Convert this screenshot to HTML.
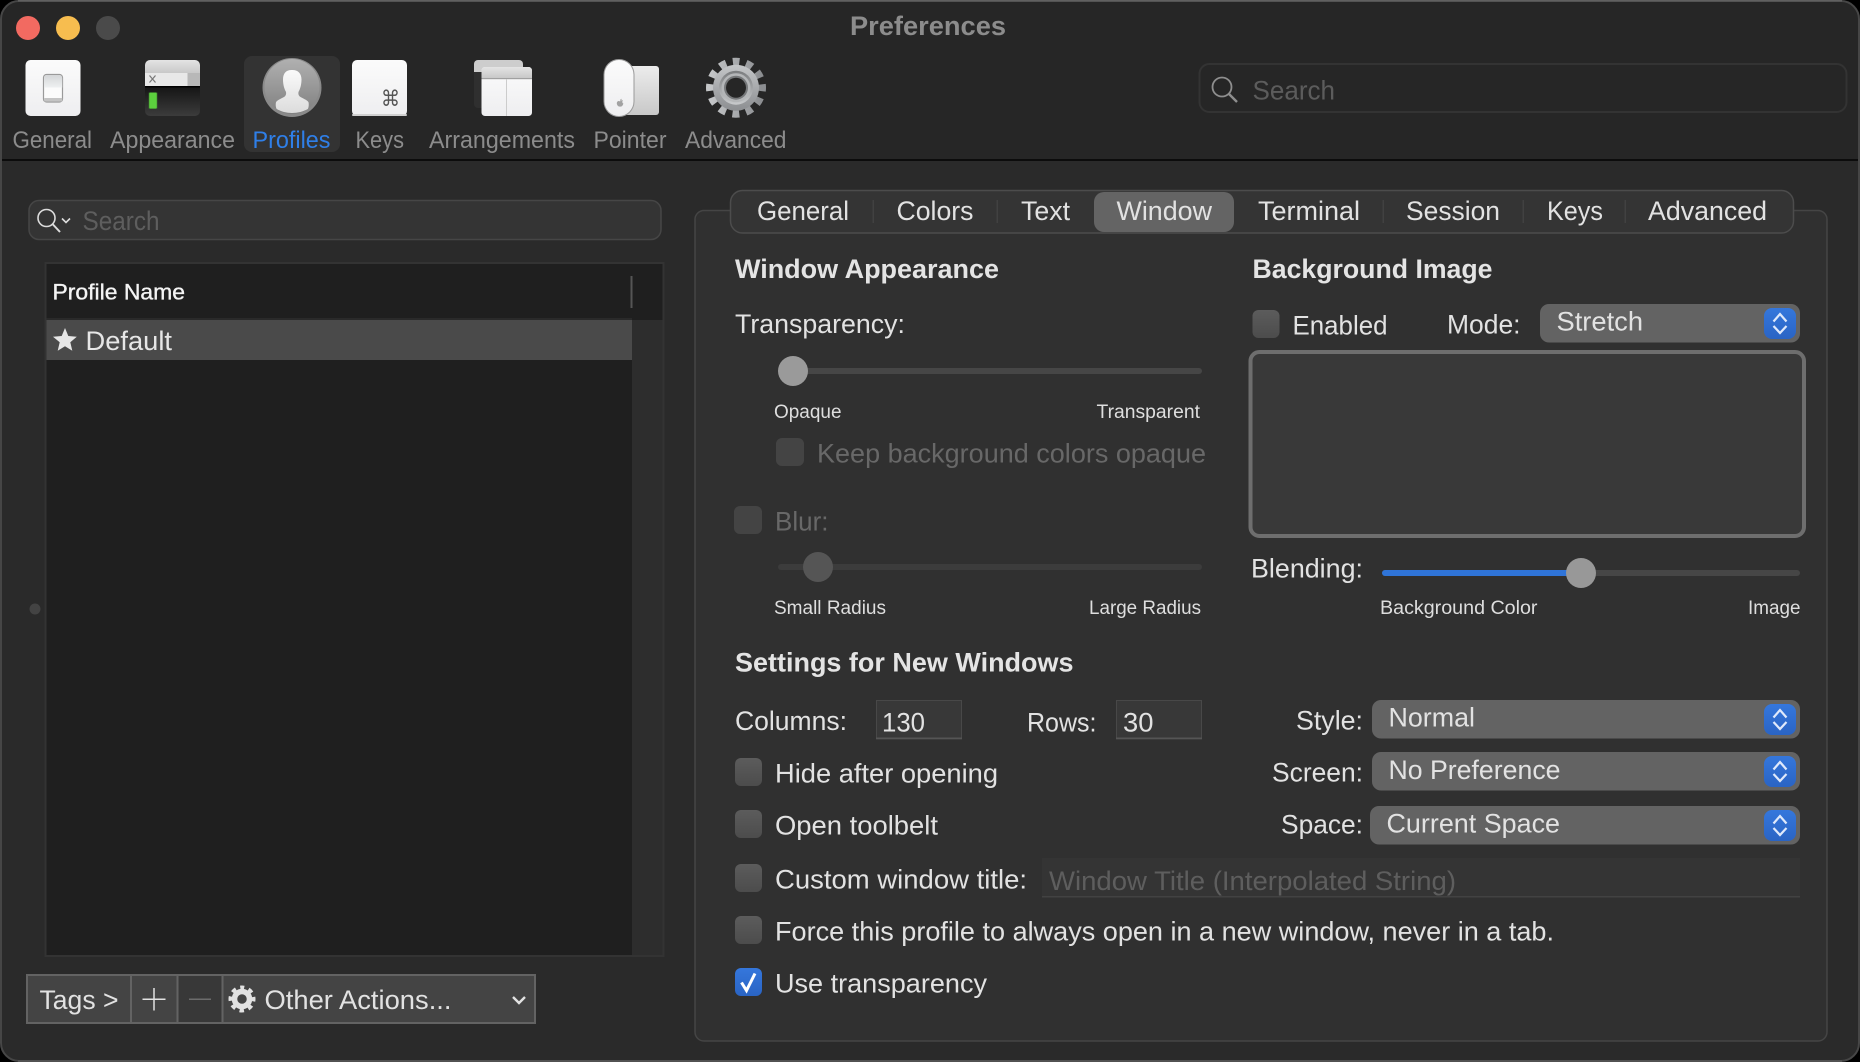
<!DOCTYPE html>
<html><head><meta charset="utf-8"><title>Preferences</title>
<style>
html,body{margin:0;padding:0;background:#000;width:1860px;height:1062px;overflow:hidden}
svg{display:block;filter:blur(.35px)}
text{font-family:"Liberation Sans",sans-serif;fill:#e2e2e2;font-size:26.5px}
.tb{font-size:24px;fill:#8c8c8c}
.h{font-weight:bold;font-size:27px;fill:#e4e4e4}
.s{font-size:19px;fill:#dedede}
.d{fill:#686868}
.ph{fill:#5e5e5e}
</style></head>
<body>
<svg width="1860" height="1062" viewBox="0 0 1860 1062" xmlns="http://www.w3.org/2000/svg">
<defs>
<linearGradient id="wh" x1="0" y1="0" x2="0" y2="1"><stop offset="0" stop-color="#fbfbfb"/><stop offset="1" stop-color="#eeeef0"/></linearGradient>
<linearGradient id="bar" x1="0" y1="0" x2="0" y2="1"><stop offset="0" stop-color="#e4e4e4"/><stop offset="1" stop-color="#c8c8c8"/></linearGradient>
<linearGradient id="sw" x1="0" y1="0" x2="0" y2="1"><stop offset="0" stop-color="#d4d6d8"/><stop offset="1" stop-color="#eef0f1"/></linearGradient>
<linearGradient id="term" x1="0" y1="0" x2="0" y2="1"><stop offset="0" stop-color="#161616"/><stop offset="1" stop-color="#3c3c3c"/></linearGradient>
<linearGradient id="av" x1="0" y1="0" x2="0" y2="1"><stop offset="0" stop-color="#b0b0b0"/><stop offset="1" stop-color="#808080"/></linearGradient>
<linearGradient id="head" x1="0" y1="0" x2="0" y2="1"><stop offset="0" stop-color="#fafafa"/><stop offset="1" stop-color="#dcdcdc"/></linearGradient>
<linearGradient id="pad" x1="0" y1="0" x2="0" y2="1"><stop offset="0" stop-color="#ececec"/><stop offset="1" stop-color="#c8c8c8"/></linearGradient>
<linearGradient id="gr" x1="0" y1="0" x2="0" y2="1"><stop offset="0" stop-color="#c4c6c8"/><stop offset="1" stop-color="#8c8e91"/></linearGradient>
<linearGradient id="gr2" x1="0" y1="0" x2="0" y2="1"><stop offset="0" stop-color="#7a7c7e"/><stop offset="1" stop-color="#c8cacc"/></linearGradient>
<linearGradient id="cb" x1="0" y1="0" x2="0" y2="1"><stop offset="0" stop-color="#5c5c5c"/><stop offset="1" stop-color="#4c4c4c"/></linearGradient>
<linearGradient id="blue" x1="0" y1="0" x2="0" y2="1"><stop offset="0" stop-color="#3577dc"/><stop offset="1" stop-color="#2a64c4"/></linearGradient>
<clipPath id="win"><rect x="1" y="1" width="1858" height="1060" rx="18"/></clipPath>
<g id="step">
  <rect x="0" y="0" width="32" height="31" rx="8" fill="url(#blue)"/>
  <path d="M9.500 13.500 L16 6 L22.500 13.500 M9.500 18 L16 25 L22.500 18" fill="none" stroke="#dfe9fb" stroke-width="2.200"/>
</g>
<rect id="chk" width="27" height="28" rx="6" fill="url(#cb)"/>
<rect id="chkd" width="28" height="28" rx="6" fill="#444"/>
</defs>

<rect width="1860" height="1062" fill="#000"/>
<g clip-path="url(#win)">
  <rect width="1860" height="1062" fill="#2a2a2a"/>
  <rect width="1860" height="159" fill="#262626"/>
  <rect y="159" width="1860" height="2" fill="#0c0c0c"/>
</g>
<rect x="1" y="1" width="1858" height="1060" rx="18" fill="none" stroke="#464646" stroke-width="2"/>
<rect x="18" y="0" width="1824" height="1.500" fill="#606060"/>
<rect x="18" y="1060" width="1824" height="2" fill="#525252"/>

<!-- traffic lights -->
<circle cx="28" cy="28" r="12" fill="#f26a61"/>
<circle cx="68" cy="28" r="12" fill="#f7bd4f"/>
<circle cx="108" cy="28" r="12" fill="#4a4a4a"/>
<text x="850" y="35" font-weight="bold" style="font-size:27px;fill:#8c8c8c" textLength="156" lengthAdjust="spacingAndGlyphs">Preferences</text>

<!-- toolbar -->
<rect x="244" y="56" width="96" height="96" rx="8" fill="#333"/>

<!-- General -->
<rect x="25.500" y="60" width="55" height="56" rx="5" fill="url(#wh)"/>
<rect x="43.500" y="74.500" width="19" height="27.500" rx="3" fill="#fbfbfb" stroke="#9a9a9a" stroke-width="1.200"/>
<path d="M44.200 78 a3 3 0 0 1 3-3 h12 a3 3 0 0 1 3 3 v9.500 h-18 z" fill="url(#sw)"/>
<rect x="44.200" y="98" width="18" height="3.400" fill="#c4c4c4"/>

<!-- Appearance -->
<path d="M145 65 a5 5 0 0 1 5-5 h45 a5 5 0 0 1 5 5 v8 h-55 z" fill="url(#bar)"/>
<rect x="145" y="73" width="55" height="13" fill="#e8e8e8"/>
<rect x="187.500" y="73" width="12.500" height="13" fill="#b8b8b8"/>
<path d="M149.500 75.500 l6 7 m0 -7 l-6 7" stroke="#777" stroke-width="1.200" fill="none"/>
<rect x="145" y="86" width="55" height="1.500" fill="#000"/>
<path d="M145 87.500 h55 v23.500 a5 5 0 0 1 -5 5 h-45 a5 5 0 0 1 -5 -5 z" fill="url(#term)"/>
<rect x="148.500" y="92" width="9" height="17" rx="1.500" fill="#3f8f2c" opacity=".5"/>
<rect x="149.200" y="92.700" width="7.600" height="15.800" rx="1" fill="#5ccf3e"/>

<!-- Profiles avatar -->
<circle cx="292" cy="87.500" r="29.500" fill="#8a8a8a"/>
<circle cx="292" cy="86.500" r="27.500" fill="url(#av)"/>
<path d="M291.500 70 c-5.500 0 -8.500 3.500 -8.500 9.500 c0 5 1.300 9.500 2.800 12 c.7 1.800 .2 3.700 -.8 4.700 c-2.400 2 -7.300 3.300 -8.900 5.800 c-.6 1.400 -.5 5.500 .6 7 c4 2.500 10 4 15.300 4 s11.800 -1.500 15.800 -4 c1.100 -1.500 1.200 -5.600 .6 -7 c-1.600 -2.500 -6.500 -3.800 -8.900 -5.800 c-1 -1 -1.500 -2.900 -.8 -4.700 c1.500 -2.500 2.800 -7 2.800 -12 c0 -6 -3.500 -9.500 -9 -9.500 z" fill="url(#head)"/>

<!-- Keys -->
<rect x="352" y="60" width="55" height="56" rx="5" fill="url(#wh)"/>
<rect x="352" y="114" width="55" height="2" rx="1" fill="#d0d0d0"/>
<text x="381" y="106" style="font-family:'DejaVu Sans',sans-serif;font-size:22px;fill:#555" textLength="19" lengthAdjust="spacingAndGlyphs">⌘</text>

<!-- Arrangements -->
<path d="M474 64 a4 4 0 0 1 4-4 h41 a4 4 0 0 1 4 4 v8 h-49 z" fill="#cdcdcd"/>
<path d="M474 72 h10 v36 h-6 a4 4 0 0 1 -4 -4 z" fill="#2f2f2f"/>
<rect x="481.500" y="67" width="50.500" height="49" rx="3.500" fill="url(#wh)"/>
<path d="M481.500 70.500 a3.500 3.500 0 0 1 3.500-3.500 h43.500 a3.500 3.500 0 0 1 3.500 3.500 v7.500 h-50.500 z" fill="url(#bar)"/>
<rect x="481.500" y="78" width="50.500" height="1.200" fill="#a0a0a0"/>
<rect x="506" y="79" width="1" height="37" fill="#cccccc"/>

<!-- Pointer -->
<rect x="624" y="66" width="35" height="49" rx="3" fill="url(#pad)"/>
<rect x="603.500" y="59" width="31" height="58" rx="15.500" fill="#9a9a9a"/>
<rect x="604.500" y="60" width="29" height="56" rx="14.500" fill="url(#wh)"/>
<path d="M620 101.500 c1-1.500 2.500-1.300 3-1 c-1 .8 -.9 2.400 .4 3 c-.6 2 -1.700 3.500 -3.400 3 c-1.700 .5 -3.200 -1.500 -3.200 -3.200 c0 -2.200 2 -2.800 3.200 -1.800 z M620 100.800 c0 -1 .7 -1.800 1.700 -2 c0 1 -.7 1.800 -1.700 2 z" fill="#a2a2a2"/>

<!-- Advanced gear -->
<circle cx="736" cy="87.700" r="25.500" fill="none" stroke="url(#gr)" stroke-width="9" stroke-dasharray="6.700 6.652" stroke-dashoffset="3.350" transform="rotate(-90 736 87.700)"/>
<circle cx="736" cy="87.700" r="23" fill="url(#gr)"/>
<circle cx="736" cy="87.700" r="17" fill="url(#gr2)"/>
<circle cx="736" cy="87.700" r="14.500" fill="#b4b6b8"/>
<circle cx="736" cy="87.700" r="12" fill="#76787a"/>
<circle cx="736" cy="87.700" r="10" fill="#262626"/>

<text class="tb" x="12.500" y="148" textLength="79.500" lengthAdjust="spacingAndGlyphs">General</text>
<text class="tb" x="110" y="148" textLength="125" lengthAdjust="spacingAndGlyphs">Appearance</text>
<text class="tb" x="252.500" y="148" textLength="78" lengthAdjust="spacingAndGlyphs" style="fill:#2f7fe8">Profiles</text>
<text class="tb" x="355.500" y="148" textLength="48.500" lengthAdjust="spacingAndGlyphs">Keys</text>
<text class="tb" x="429" y="148" textLength="146" lengthAdjust="spacingAndGlyphs">Arrangements</text>
<text class="tb" x="593.500" y="148" textLength="73" lengthAdjust="spacingAndGlyphs">Pointer</text>
<text class="tb" x="685" y="148" textLength="101.500" lengthAdjust="spacingAndGlyphs">Advanced</text>

<!-- top search -->
<rect x="1199.500" y="64" width="647" height="48" rx="10" fill="#262626" stroke="#333" stroke-width="2"/>
<circle cx="1222" cy="87" r="9.500" fill="none" stroke="#8e8e8e" stroke-width="1.800"/>
<path d="M1229 94 L1237 102" stroke="#8e8e8e" stroke-width="2.400"/>
<text class="ph" x="1252.500" y="99.500" textLength="82.500" lengthAdjust="spacingAndGlyphs" style="fill:#5c5c5c">Search</text>

<!-- left search -->
<rect x="29" y="200.500" width="632" height="39" rx="10" fill="#343434" stroke="#464646" stroke-width="1.500"/>
<circle cx="46.500" cy="218" r="8.500" fill="none" stroke="#dcdcdc" stroke-width="1.600"/>
<path d="M52.500 224 L60 232" stroke="#dcdcdc" stroke-width="2"/>
<path d="M62 218.500 l4 4 l4 -4" fill="none" stroke="#dcdcdc" stroke-width="1.600"/>
<text class="ph" x="82.500" y="230" textLength="77" lengthAdjust="spacingAndGlyphs">Search</text>

<!-- table -->
<rect x="45.500" y="263" width="618" height="693" fill="#1f1f1f" stroke="#333" stroke-width="2"/>
<rect x="632" y="320" width="30.500" height="635" fill="#2d2d2d"/>
<rect x="46.500" y="318" width="585.500" height="2" fill="#2a2a2a"/>
<rect x="46.500" y="320" width="585.500" height="40" fill="#4a4a4a"/>
<rect x="630.500" y="276" width="2" height="32" fill="#555"/>
<text x="52.500" y="299.500" textLength="132.500" lengthAdjust="spacingAndGlyphs" style="font-size:22px;fill:#f4f4f4;stroke:#f4f4f4;stroke-width:.35px">Profile Name</text>
<path d="M65 328 L68.300 336 L76.800 336.700 L70.300 342.200 L72.300 350.800 L65 346.200 L57.700 350.800 L59.700 342.200 L53 336.700 L61.700 336 Z" fill="#e6e6e6"/>
<text x="85.500" y="350" textLength="86.500" lengthAdjust="spacingAndGlyphs" style="fill:#e6e6e6">Default</text>
<circle cx="35" cy="609" r="5.500" fill="#434343"/>

<!-- bottom toolbar -->
<rect x="27" y="975" width="508" height="48" fill="#444" stroke="#636363" stroke-width="2"/>
<rect x="178" y="976" width="44" height="46" fill="#383838"/>
<rect x="130" y="974" width="2" height="50" fill="#636363"/>
<rect x="176.500" y="974" width="2" height="50" fill="#636363"/>
<rect x="221.500" y="974" width="2" height="50" fill="#636363"/>
<text x="39.500" y="1009" textLength="79" lengthAdjust="spacingAndGlyphs">Tags &gt;</text>
<path d="M142.500 999.300 H165.500 M154 988 V1010.500" stroke="#e2e2e2" stroke-width="1.500"/>
<path d="M189 999.300 H211" stroke="#6c6c6c" stroke-width="1.500"/>
<circle cx="242" cy="999" r="11" fill="none" stroke="#e2e2e2" stroke-width="5" stroke-dasharray="4.300 4.340" stroke-dashoffset="2.150" transform="rotate(-90 242 999)"/>
<circle cx="242" cy="999" r="7.500" fill="none" stroke="#e2e2e2" stroke-width="5.500"/>
<text x="264.500" y="1009" textLength="187" lengthAdjust="spacingAndGlyphs">Other Actions...</text>
<path d="M513 997 l6 6 l6 -6" fill="none" stroke="#e2e2e2" stroke-width="2.400"/>

<!-- right panel -->
<rect x="695" y="210.500" width="1132" height="830.500" rx="9" fill="#303030" stroke="#454545" stroke-width="1.500"/>
<rect x="730.500" y="190.500" width="1063" height="42.500" rx="12" fill="#343434" stroke="#4c4c4c" stroke-width="1.500"/>
<rect x="1094" y="192" width="140" height="40" rx="10" fill="#646464"/>
<g fill="#414141">
<rect x="872.500" y="200" width="1.500" height="23"/><rect x="996.500" y="200" width="1.500" height="23"/>
<rect x="1382.500" y="200" width="1.500" height="23"/><rect x="1522.500" y="200" width="1.500" height="23"/><rect x="1624.500" y="200" width="1.500" height="23"/>
</g>
<g>
<text x="757" y="220" textLength="92" lengthAdjust="spacingAndGlyphs">General</text>
<text x="896.500" y="220" textLength="77" lengthAdjust="spacingAndGlyphs">Colors</text>
<text x="1021" y="220" textLength="49" lengthAdjust="spacingAndGlyphs">Text</text>
<text x="1116.500" y="220" textLength="95.500" lengthAdjust="spacingAndGlyphs">Window</text>
<text x="1258" y="220" textLength="102" lengthAdjust="spacingAndGlyphs">Terminal</text>
<text x="1406" y="220" textLength="94" lengthAdjust="spacingAndGlyphs">Session</text>
<text x="1547" y="220" textLength="56" lengthAdjust="spacingAndGlyphs">Keys</text>
<text x="1648" y="220" textLength="119" lengthAdjust="spacingAndGlyphs">Advanced</text>
</g>

<!-- Window Appearance -->
<text class="h" x="735" y="278" textLength="264" lengthAdjust="spacingAndGlyphs">Window Appearance</text>
<text x="735" y="333" textLength="170" lengthAdjust="spacingAndGlyphs">Transparency:</text>
<rect x="778" y="368" width="424" height="6" rx="3" fill="#464646"/>
<circle cx="793" cy="371" r="15" fill="#9a9a9a"/>
<text class="s" x="774" y="418" textLength="67.500" lengthAdjust="spacingAndGlyphs">Opaque</text>
<text class="s" x="1096.500" y="418" textLength="103.500" lengthAdjust="spacingAndGlyphs">Transparent</text>
<use href="#chkd" x="776" y="438"/>
<text class="d" x="817" y="462.500" textLength="389" lengthAdjust="spacingAndGlyphs">Keep background colors opaque</text>

<use href="#chkd" x="734" y="506"/>
<text class="d" x="775" y="530.500" textLength="53.500" lengthAdjust="spacingAndGlyphs">Blur:</text>
<rect x="778" y="564" width="424" height="6" rx="3" fill="#3c3c3c"/>
<circle cx="818" cy="567" r="15" fill="#555"/>
<text class="s" x="774" y="614" textLength="112" lengthAdjust="spacingAndGlyphs">Small Radius</text>
<text class="s" x="1089" y="614" textLength="112" lengthAdjust="spacingAndGlyphs">Large Radius</text>

<!-- Background Image -->
<text class="h" x="1252.500" y="278" textLength="240" lengthAdjust="spacingAndGlyphs">Background Image</text>
<use href="#chk" x="1252.500" y="310"/>
<text x="1292.500" y="334.500" textLength="95" lengthAdjust="spacingAndGlyphs">Enabled</text>
<text x="1447" y="333.500" textLength="73.500" lengthAdjust="spacingAndGlyphs">Mode:</text>
<rect x="1540" y="304" width="260" height="38.500" rx="9" fill="#636363"/>
<use href="#step" x="1764" y="308"/>
<text x="1556.500" y="330.500" textLength="86.500" lengthAdjust="spacingAndGlyphs">Stretch</text>
<rect x="1250.500" y="352" width="553.500" height="184" rx="9" fill="#393939" stroke="#6e6e6e" stroke-width="4"/>
<text x="1251" y="577.500" textLength="112" lengthAdjust="spacingAndGlyphs">Blending:</text>
<rect x="1382" y="570" width="418" height="6" rx="3" fill="#464646"/>
<rect x="1382" y="570" width="190" height="6" rx="3" fill="#2f74d8"/>
<circle cx="1581" cy="573" r="15" fill="#989898"/>
<text class="s" x="1380" y="614" textLength="157.500" lengthAdjust="spacingAndGlyphs">Background Color</text>
<text class="s" x="1748" y="614" textLength="52.500" lengthAdjust="spacingAndGlyphs">Image</text>

<!-- Settings -->
<text class="h" x="735" y="671.500" textLength="338.500" lengthAdjust="spacingAndGlyphs">Settings for New Windows</text>
<text x="735" y="730" textLength="112" lengthAdjust="spacingAndGlyphs">Columns:</text>
<rect x="876.500" y="700.500" width="85" height="38.500" fill="#383838" stroke="#484848" stroke-width="1"/>
<rect x="876" y="737.500" width="86" height="1.500" fill="#555"/>
<text x="882" y="731.500" textLength="43" lengthAdjust="spacingAndGlyphs">130</text>
<text x="1027" y="731.500" textLength="69.500" lengthAdjust="spacingAndGlyphs">Rows:</text>
<rect x="1116.500" y="700.500" width="85" height="38.500" fill="#383838" stroke="#484848" stroke-width="1"/>
<rect x="1116" y="737.500" width="86" height="1.500" fill="#555"/>
<text x="1123" y="731.500" textLength="30.500" lengthAdjust="spacingAndGlyphs">30</text>

<text x="1296" y="729.500" textLength="67" lengthAdjust="spacingAndGlyphs">Style:</text>
<rect x="1372" y="700" width="428" height="38.500" rx="9" fill="#636363"/>
<use href="#step" x="1764" y="704"/>
<text x="1388.500" y="726.500" textLength="86.500" lengthAdjust="spacingAndGlyphs">Normal</text>

<text x="1272" y="781.500" textLength="91" lengthAdjust="spacingAndGlyphs">Screen:</text>
<rect x="1372" y="752" width="428" height="38.500" rx="9" fill="#636363"/>
<use href="#step" x="1764" y="756"/>
<text x="1388.500" y="779" textLength="172" lengthAdjust="spacingAndGlyphs">No Preference</text>

<text x="1281" y="833.500" textLength="82" lengthAdjust="spacingAndGlyphs">Space:</text>
<rect x="1370" y="806" width="430" height="38.500" rx="9" fill="#636363"/>
<use href="#step" x="1764" y="810"/>
<text x="1386.500" y="832.500" textLength="173.500" lengthAdjust="spacingAndGlyphs">Current Space</text>

<use href="#chk" x="735" y="758"/>
<text x="775" y="782.500" textLength="223" lengthAdjust="spacingAndGlyphs">Hide after opening</text>
<use href="#chk" x="735" y="810"/>
<text x="775" y="834.500" textLength="163" lengthAdjust="spacingAndGlyphs">Open toolbelt</text>
<use href="#chk" x="735" y="864"/>
<text x="775" y="888.500" textLength="252" lengthAdjust="spacingAndGlyphs">Custom window title:</text>
<rect x="1042" y="858" width="758" height="39.500" fill="#343434"/>
<rect x="1042" y="896" width="758" height="1.500" fill="#424242"/>
<text class="ph" x="1049" y="890" textLength="407" lengthAdjust="spacingAndGlyphs">Window Title (Interpolated String)</text>
<use href="#chk" x="735" y="916"/>
<text x="775" y="940.500" textLength="779" lengthAdjust="spacingAndGlyphs">Force this profile to always open in a new window, never in a tab.</text>
<rect x="735" y="968" width="27" height="28" rx="6" fill="url(#blue)"/>
<path d="M741.500 982.500 L746.500 990.500 L755 973.500" fill="none" stroke="#fff" stroke-width="3"/>
<text x="775" y="992.500" textLength="212" lengthAdjust="spacingAndGlyphs">Use transparency</text>
</svg>
</body></html>
